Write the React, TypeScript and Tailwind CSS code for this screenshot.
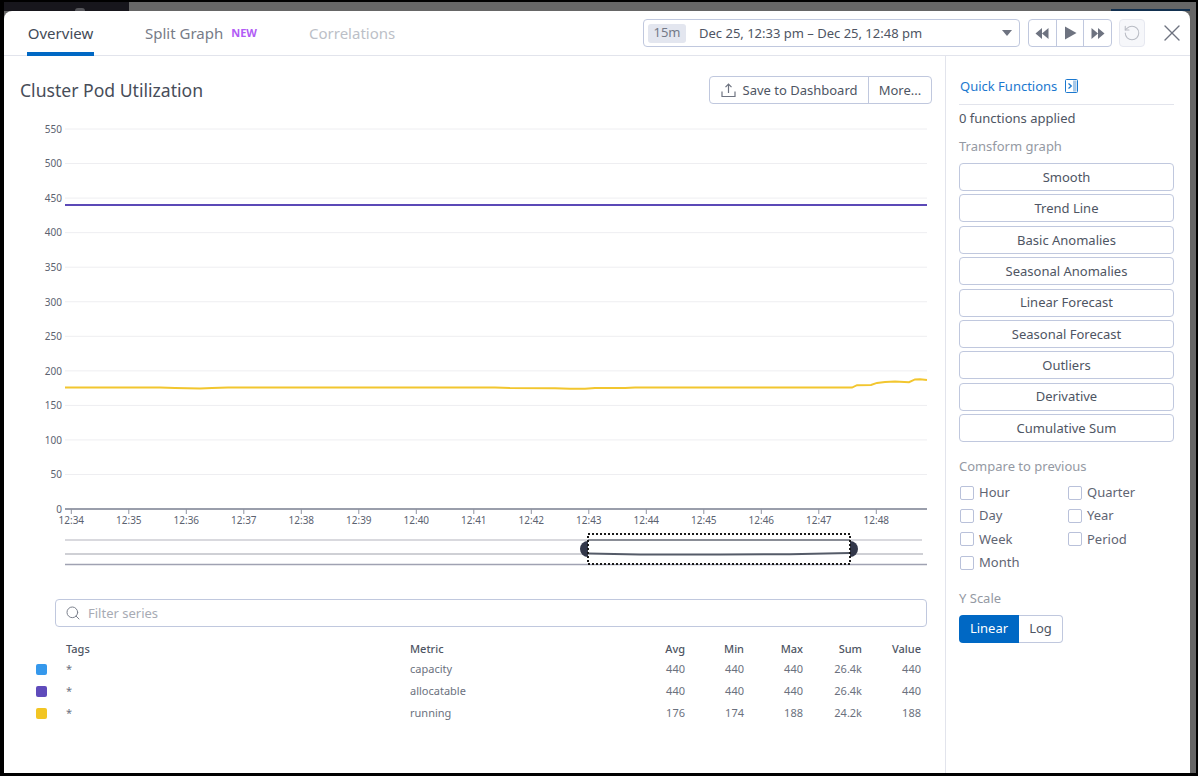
import { RotateCcw, Search, X } from "lucide-react";

const yTicks = [550, 500, 450, 400, 350, 300, 250, 200, 150, 100, 50, 0];
const xTicks = ["12:34", "12:35", "12:36", "12:37", "12:38", "12:39", "12:40", "12:41", "12:42", "12:43", "12:44", "12:45", "12:46", "12:47", "12:48"];
const transforms = ["Smooth", "Trend Line", "Basic Anomalies", "Seasonal Anomalies", "Linear Forecast", "Seasonal Forecast", "Outliers", "Derivative", "Cumulative Sum"];
const compareLeft = ["Hour", "Day", "Week", "Month"];
const compareRight = ["Quarter", "Year", "Period"];

const series = [
  { color: "bg-[#3598ec]", metric: "capacity", avg: "440", min: "440", max: "440", sum: "26.4k", value: "440" },
  { color: "bg-[#5f4bbb]", metric: "allocatable", avg: "440", min: "440", max: "440", sum: "26.4k", value: "440" },
  { color: "bg-[#f2c523]", metric: "running", avg: "176", min: "174", max: "188", sum: "24.2k", value: "188" },
];

const runningLine =
  "M65 387.6 L160 387.6 L175 388.1 L200 388.6 L212 387.9 L228 387.6 L495 387.6 L510 388.1 L555 388.3 L570 388.8 L585 388.8 L595 388.1 L625 387.9 L635 387.6 L852 387.6 L857 385.2 L871 385 L877 382.9 L885 382 L895 381.4 L909 382.2 L915 379.4 L920 379.2 L927 380";

function Chart() {
  return (
    <svg width="930" height="455" viewBox="4 120 930 455" className="block">
      {yTicks.map((t, i) => {
        const y = 129 + i * 34.55;
        return (
          <g key={t}>
            {t !== 0 && <line x1="65" x2="927" y1={y} y2={y} stroke="#eeeef1" strokeWidth="1" />}
            <text x="62" y={y + 3.8} textAnchor="end" fontSize="10" fill="#5c6270">{t}</text>
          </g>
        );
      })}
      <line x1="65" x2="927" y1="205" y2="205" stroke="#5b49b7" strokeWidth="2" />
      <path d={runningLine} fill="none" stroke="#f2c62f" strokeWidth="2" />
      <line x1="65" x2="927" y1="509" y2="509" stroke="#9a9eab" strokeWidth="2" />
      {xTicks.map((t, i) => {
        const x = 71.3 + i * 57.5;
        return (
          <g key={t}>
            <line x1={x} x2={x} y1="509" y2="514" stroke="#8f93a0" strokeWidth="1" />
            <text x={x} y="524" textAnchor="middle" fontSize="10" fill="#5c6270">{t}</text>
          </g>
        );
      })}

      {/* range selector */}
      <line x1="65" x2="922" y1="540" y2="540" stroke="#d9d9de" strokeWidth="2" />
      <line x1="65" x2="923" y1="554" y2="554" stroke="#cfd0d5" strokeWidth="2" />
      <line x1="65" x2="927" y1="564.5" y2="564.5" stroke="#a0a2b2" strokeWidth="1.5" />
      <circle cx="588" cy="549" r="8" fill="#33384a" />
      <circle cx="850" cy="549" r="8" fill="#33384a" />
      <rect x="588" y="534" width="262" height="30" fill="#fff" />
      <line x1="588" x2="850" y1="540" y2="540" stroke="#8a8d96" strokeWidth="2" />
      <path d="M588 553.6 L640 554.4 L720 554.6 L790 554.2 L850 553" fill="none" stroke="#555b68" strokeWidth="2" />
      <rect x="588" y="534" width="262" height="30" fill="none" stroke="#1a1a1a" strokeWidth="2" strokeDasharray="2 2" />
    </svg>
  );
}

function Transport() {
  return (
    <div className="flex h-[28px] w-[84px] rounded-[4px] border border-[#c0c8de] ml-[8px]">
      <button className="flex-1 flex items-center justify-center border-r border-[#c0c8de]">
        <svg width="14" height="13" viewBox="0 0 14 13" fill="#6e7380"><path d="M7 1v11L0.5 6.5zM13.5 1v11L7 6.5z" /></svg>
      </button>
      <button className="flex-1 flex items-center justify-center border-r border-[#c0c8de]">
        <svg width="13" height="14" viewBox="0 0 13 14" fill="#6e7380"><path d="M1 0.5 L12.5 7 L1 13.5z" /></svg>
      </button>
      <button className="flex-1 flex items-center justify-center">
        <svg width="14" height="13" viewBox="0 0 14 13" fill="#6e7380"><path d="M7 1v11L13.5 6.5zM0.5 1v11L7 6.5z" /></svg>
      </button>
    </div>
  );
}

function Check({ label }: { label: string }) {
  return (
    <label className="flex items-center h-[23.4px] gap-[5px] text-[13px] text-[#5f6573]">
      <span className="w-[14px] h-[14px] rounded-[2px] border border-[#b9c1da] bg-white ml-[1px]" />
      {label}
    </label>
  );
}

export default function App() {
  return (
    <div className="w-[1198px] h-[776px] bg-black pt-[2px] pr-[2px] pb-[3px] pl-[4px] overflow-hidden font-['Noto_Sans',sans-serif]">
      <div className="h-full flex flex-col bg-[#666666] pr-[6px]">
        <div className="h-[9px] flex justify-between shrink-0">
          <div className="w-[125px] bg-[#17161c] flex items-end pl-[71px]">
            <div className="w-[10px] h-[3px] rounded-t-full bg-[#55555a]" />
          </div>
          <div className="w-[79px] h-[2px] mt-[7px] bg-[#12304f]" />
        </div>
        <div className="flex-1 min-h-0 flex flex-col bg-white rounded-t-[8px]">
          {/* header */}
          <div className="h-[45px] shrink-0 flex items-stretch border-b border-[#e2e4ec] relative">
            <div className="ml-[23px] w-[67px] h-[45px] border-b-[4px] border-[#0068c4] flex items-center justify-center text-[15px] text-[#434a57] pt-[3px]">Overview</div>
            <div className="ml-[51px] flex items-center text-[15px] text-[#777c88]">Split Graph</div>
            <div className="ml-[8px] flex items-center text-[11px] font-bold text-[#b15cf5] pt-[1px]">NEW</div>
            <div className="ml-[52px] flex items-center text-[15px] text-[#bcbfc7]">Correlations</div>
            <div className="ml-auto flex items-start pt-[8px]">
              <div className="w-[377px] h-[28px] rounded-[4px] border border-[#c0c8de] flex items-center pl-[4px] pr-[7px]">
                <span className="w-[38px] h-[19px] rounded-[3px] bg-[#e3e6ef] text-[13px] text-[#747a88] flex items-center justify-center">15m</span>
                <span className="ml-[13px] text-[13px] text-[#4e5563] pt-[1px]">Dec 25, 12:33 pm – Dec 25, 12:48 pm</span>
                <svg className="ml-auto" width="10" height="6" viewBox="0 0 10 6" fill="#6e7380"><path d="M0 0h10L5 6z" /></svg>
              </div>
              <Transport />
              <div className="ml-[7px] w-[26px] h-[28px] rounded-[4px] border border-[#e6e8f0] bg-[#f6f7fa] flex items-center justify-center">
                <RotateCcw size={18} strokeWidth={1.4} className="text-[#b9bcc4]" />
              </div>
              <div className="w-[45px] h-[28px] flex items-center pl-[13px]">
                <X size={28} strokeWidth={1.2} className="text-[#6e7380] shrink-0" />
              </div>
            </div>
          </div>

          <div className="flex-1 min-h-0 flex">
            {/* graph column */}
            <div className="w-[942px] shrink-0 border-r border-[#e2e4ec] pl-0">
              <div className="h-[48px] pt-[20px] flex items-center justify-between pl-[16px] pr-[13px]">
                <h1 className="text-[17.6px] text-[#474d59] font-normal leading-none pt-[1px]">Cluster Pod Utilization</h1>
                <div className="flex h-[28px] rounded-[4px] border border-[#c0c8de] text-[13px] text-[#4e5563]">
                  <button className="w-[159px] flex items-center justify-center gap-[7px] border-r border-[#c0c8de] pt-[1px]">
                    <svg width="15" height="15" viewBox="0 0 15 15" fill="none" stroke="#6e7380" strokeWidth="1.2">
                      <path d="M7.5 10V1.5M4.5 4.2 7.5 1.2l3 3M1 8.5v5h13v-5" />
                    </svg>
                    Save to Dashboard
                  </button>
                  <button className="w-[62px] pt-[1px]">More...</button>
                </div>
              </div>
              <div className="mt-[16px]">
                <Chart />
              </div>
              <div className="mt-[24px] ml-[51px] w-[872px] h-[28px] rounded-[4px] border border-[#c0c8de] flex items-center pl-[9px] gap-[7px]">
                <Search size={16} strokeWidth={1.5} className="text-[#7c818d]" />
                <span className="text-[13px] text-[#a7abb4] pt-[1px]">Filter series</span>
              </div>
              <div className="mt-[13px] ml-[32px] w-[889px] text-[11px] text-[#6b717e]">
                <div className="grid grid-cols-[30px_344px_215px_60px_59px_59px_59px_59px] h-[18px] items-center font-medium text-[#4e5563]">
                  <span />
                  <span>Tags</span>
                  <span>Metric</span>
                  <span className="text-right">Avg</span>
                  <span className="text-right">Min</span>
                  <span className="text-right">Max</span>
                  <span className="text-right">Sum</span>
                  <span className="text-right">Value</span>
                </div>
                {series.map((s) => (
                  <div key={s.metric} className="grid grid-cols-[30px_344px_215px_60px_59px_59px_59px_59px] h-[22px] items-center">
                    <span className={`w-[11px] h-[11px] rounded-[2px] ${s.color}`} />
                    <span>*</span>
                    <span>{s.metric}</span>
                    <span className="text-right">{s.avg}</span>
                    <span className="text-right">{s.min}</span>
                    <span className="text-right">{s.max}</span>
                    <span className="text-right">{s.sum}</span>
                    <span className="text-right">{s.value}</span>
                  </div>
                ))}
              </div>
            </div>

            {/* quick functions */}
            <div className="w-[215px] ml-[13px] shrink-0">
              <div className="h-[49px] pt-[20px] pl-[1px] border-b border-[#e2e4ec] flex items-start gap-[8px] text-[13px] text-[#1b78cf] leading-[20px]">
                <span>Quick Functions</span>
                <svg width="13" height="14" viewBox="0 0 13 14" className="mt-[3px]">
                  <rect x="0.5" y="0.5" width="12" height="13" rx="1" fill="#fff" stroke="#1b78cf" />
                  <rect x="8" y="1.5" width="3.5" height="11" fill="#a9c9e8" />
                  <path d="M3.5 4.5 6.3 7 3.5 9.5" fill="none" stroke="#1b78cf" strokeWidth="1.3" />
                </svg>
              </div>
              <div className="mt-[3px] text-[13px] leading-[20px] text-[#4e5563]">0 functions applied</div>
              <div className="mt-[8px] text-[13px] leading-[20px] text-[#9499a3]">Transform graph</div>
              <div className="mt-[7px] flex flex-col gap-[3.375px]">
                {transforms.map((t) => (
                  <button key={t} className="h-[28px] rounded-[4px] border border-[#c0c8de] text-[13px] text-[#4e5563] pt-[1px]">{t}</button>
                ))}
              </div>
              <div className="mt-[14px] text-[13px] leading-[20px] text-[#9499a3]">Compare to previous</div>
              <div className="mt-[5px] grid grid-cols-[108px_1fr]">
                <div>{compareLeft.map((c) => <Check key={c} label={c} />)}</div>
                <div>{compareRight.map((c) => <Check key={c} label={c} />)}</div>
              </div>
              <div className="mt-[13px] text-[13px] leading-[20px] text-[#9499a3]">Y Scale</div>
              <div className="mt-[7px] flex h-[28px] w-[104px] text-[13px]">
                <button className="w-[60px] rounded-l-[4px] bg-[#0068c4] text-white">Linear</button>
                <button className="w-[44px] rounded-r-[4px] border border-l-0 border-[#c0c8de] text-[#4e5563]">Log</button>
              </div>
            </div>
          </div>
        </div>
      </div>
    </div>
  );
}
